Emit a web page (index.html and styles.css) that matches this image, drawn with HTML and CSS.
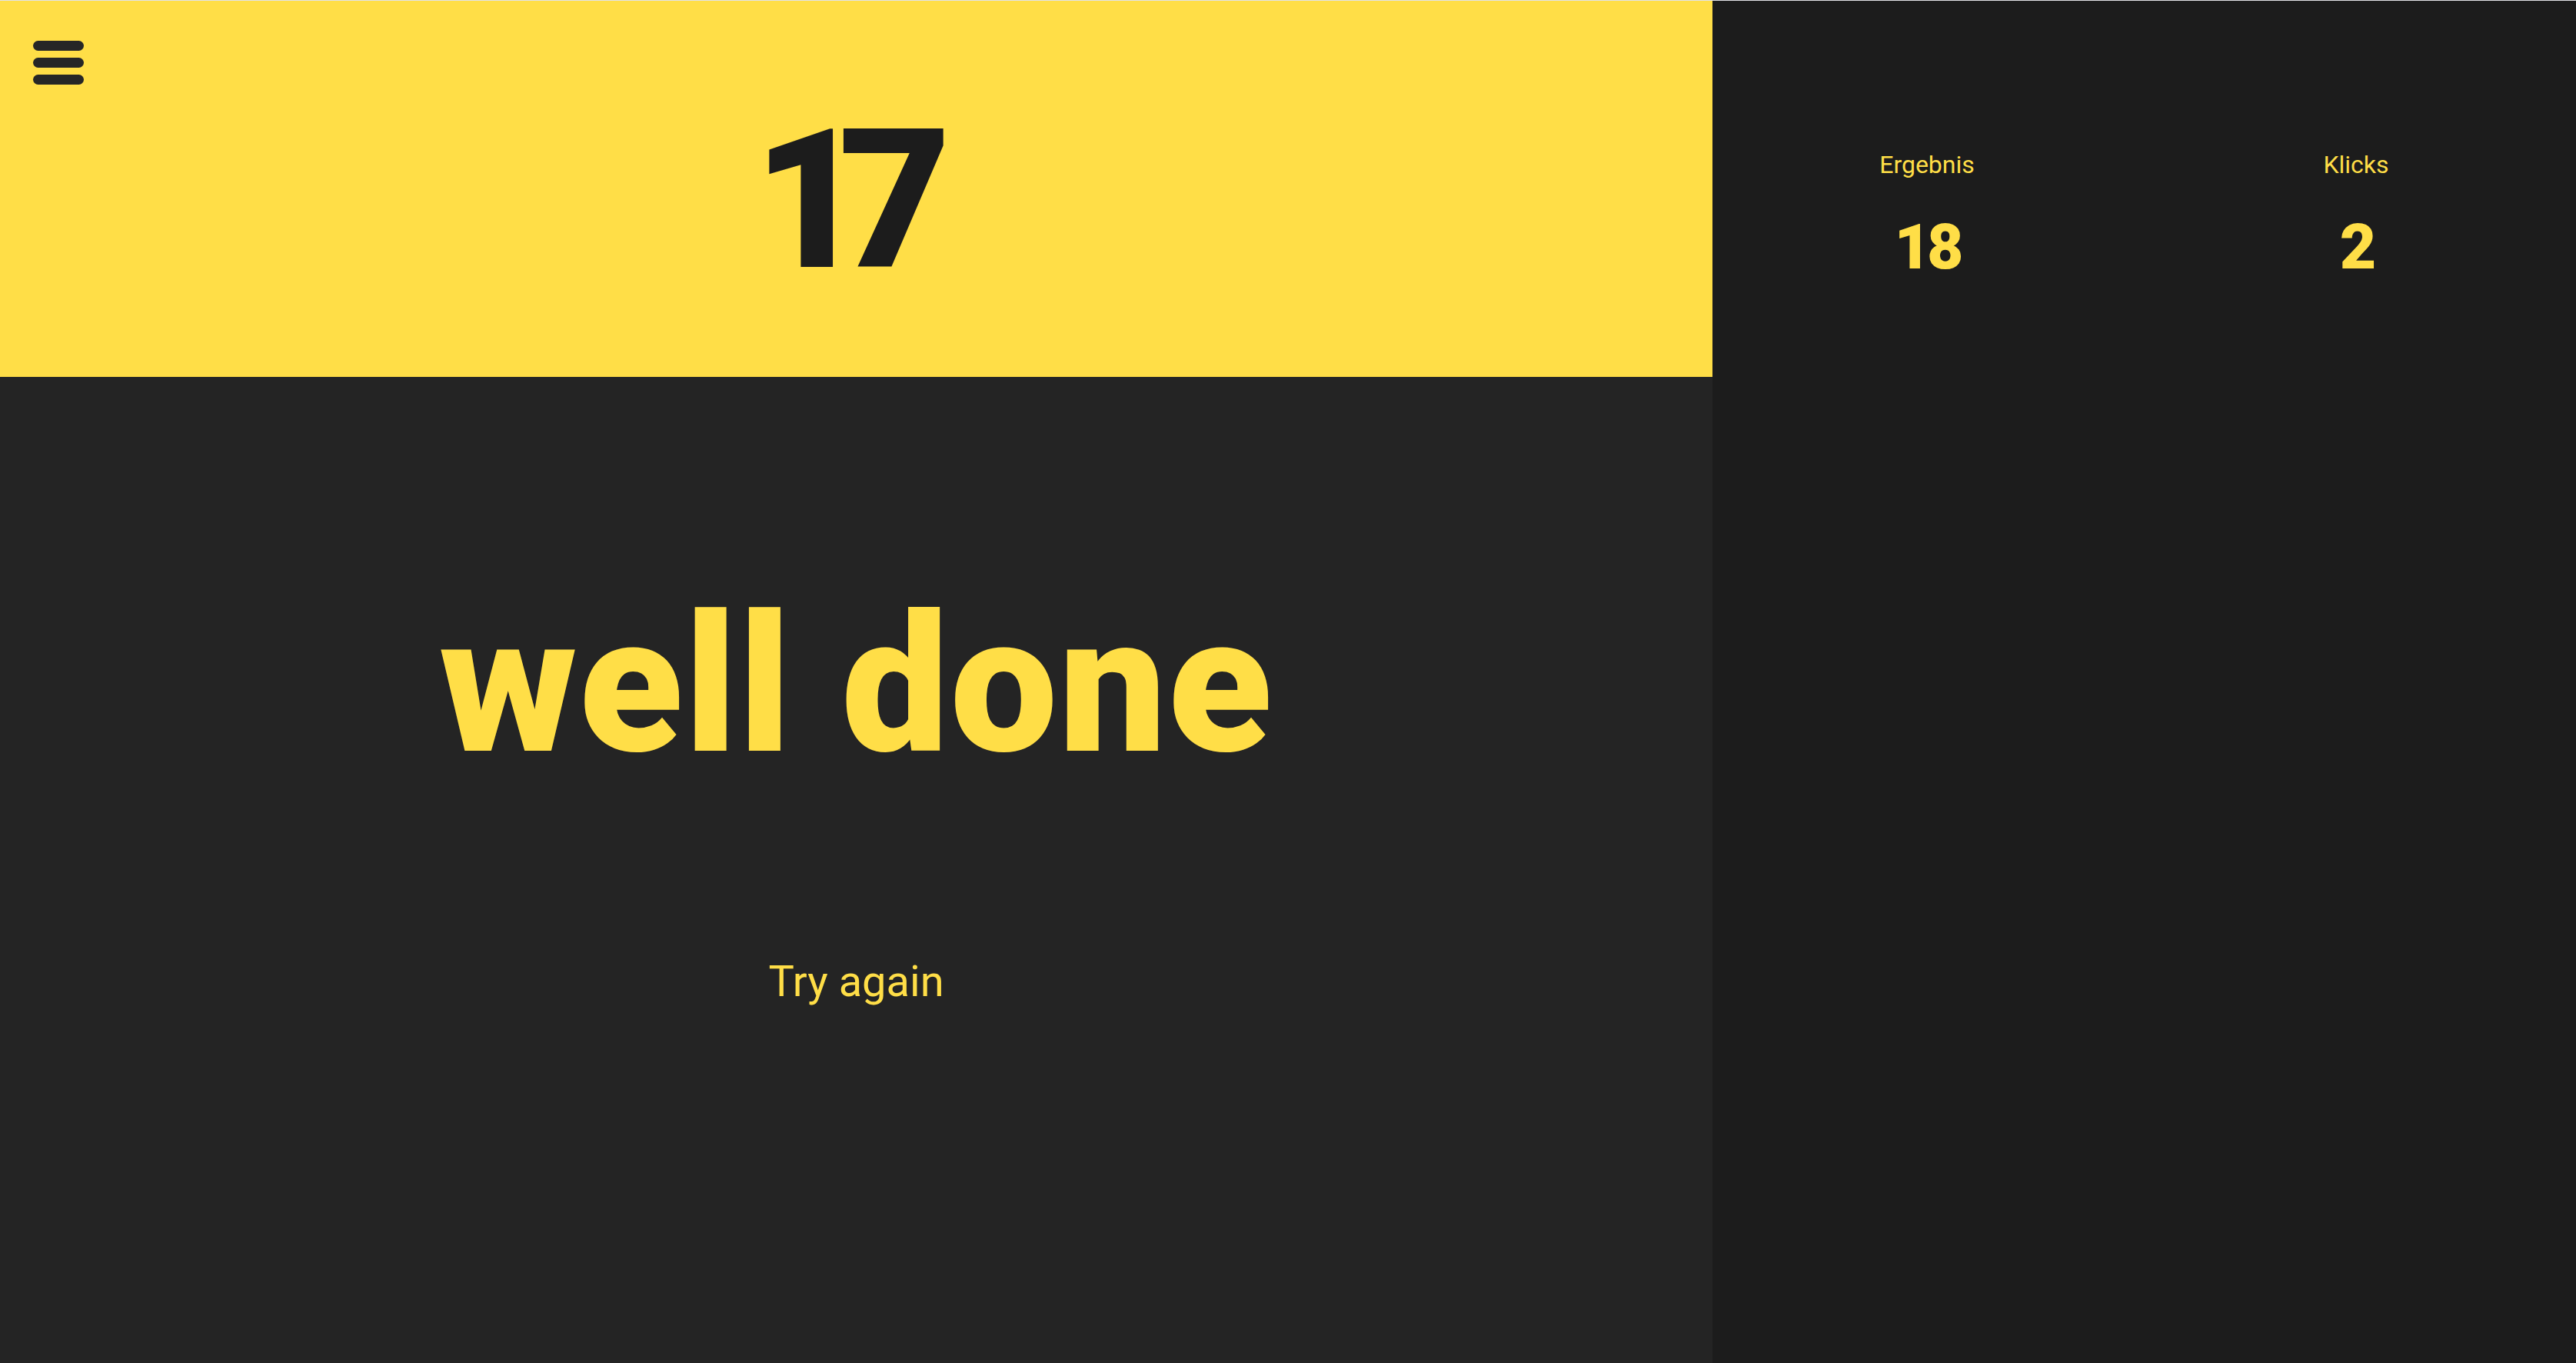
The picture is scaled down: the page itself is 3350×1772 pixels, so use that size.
FILE: index.html
```html
<!DOCTYPE html>
<html lang="de">
<head>
<meta charset="utf-8">
<title>well done</title>
<link rel="stylesheet" href="styles.css">
</head>
<body>
<div class="app">
  <main class="game">
    <header class="target">
      <button class="menu" aria-label="Menü">
        <span class="bar"></span><span class="bar"></span><span class="bar"></span>
      </button>
      <div class="target-number">17</div>
    </header>
    <section class="result">
      <h1 class="headline">well done</h1>
      <button class="retry">Try again</button>
    </section>
  </main>
  <aside class="stats">
    <div class="stat">
      <div class="stat-label">Ergebnis</div>
      <div class="stat-value">18</div>
    </div>
    <div class="stat">
      <div class="stat-label">Klicks</div>
      <div class="stat-value">2</div>
    </div>
  </aside>
</div>
</body>
</html>
```
FILE: styles.css
```css
html, body {
  margin: 0;
  padding: 0;
  height: 100%;
}
body {
  border-top: 1px solid #e2e2e6;
  box-sizing: border-box;
  font-family: Roboto, "Liberation Sans", sans-serif;
  background: #242424;
  overflow: hidden;
}
.app {
  display: flex;
  height: 1771px;
}
.game {
  width: 2227px;
  display: flex;
  flex-direction: column;
  background: #242424;
}
.target {
  position: relative;
  height: 489px;
  background: #ffde47;
  display: flex;
  justify-content: center;
  box-sizing: border-box;
  padding-top: 133px;
}
.menu {
  position: absolute;
  left: 43px;
  top: 52px;
  width: 66px;
  padding: 0;
  border: 0;
  background: none;
  display: flex;
  flex-direction: column;
  gap: 9px;
  cursor: pointer;
}
.bar {
  display: block;
  height: 13px;
  width: 66px;
  border-radius: 7px;
  background: #262626;
}
.target-number {
  font-size: 253px;
  font-weight: 900;
  line-height: 1;
  color: #1c1c1c;
  letter-spacing: -36px;
  margin-left: -46px;
}
.result {
  flex: 1;
  display: flex;
  flex-direction: column;
  align-items: center;
}
.headline {
  margin: 278px 0 0;
  font-size: 248px;
  font-weight: 900;
  line-height: 1;
  color: #ffde47;
  letter-spacing: 2px;
}
.retry {
  margin-top: 232px;
  padding: 0;
  border: 0;
  background: none;
  font-family: Roboto, "Liberation Sans", sans-serif;
  font-size: 56px;
  font-weight: 400;
  line-height: 1;
  color: #ffde47;
  cursor: pointer;
}
.stats {
  flex: 1;
  background: #1c1c1c;
  display: grid;
  grid-template-columns: 558px 558px;
  align-content: start;
  padding-top: 197px;
}
.stat {
  display: flex;
  flex-direction: column;
  align-items: center;
  color: #ffde47;
}
.stat-label {
  font-size: 32px;
  line-height: 1;
}
.stat-value {
  margin-top: 50px;
  font-size: 82px;
  font-weight: 900;
  line-height: 1;
  letter-spacing: -5px;
}
```
